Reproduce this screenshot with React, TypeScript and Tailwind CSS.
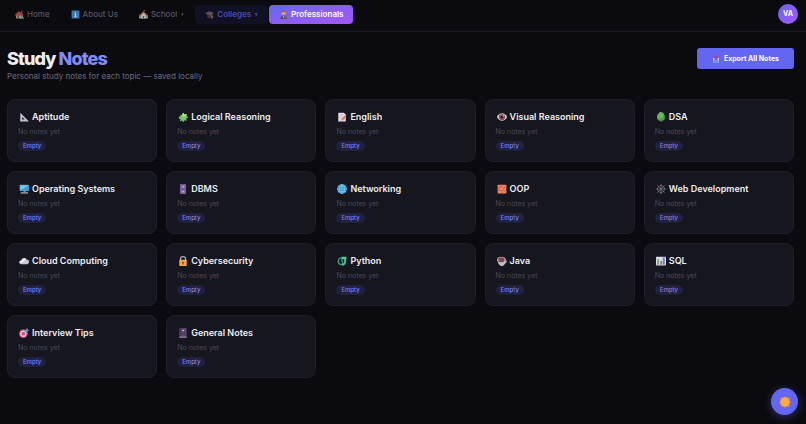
import type { ReactNode } from "react";
import { clsx } from "clsx";

type IconName =
  | "home" | "info" | "school" | "cap" | "person" | "export" | "ruler" | "puzzle" | "memo"
  | "eye" | "tree" | "desktop" | "cabinet" | "globe" | "brick" | "web" | "cloud" | "lock"
  | "snake" | "coffee" | "chart" | "target" | "notebook" | "sun";

const ICONS: Record<IconName, ReactNode> = {
  home: (
    <>
      <path d="M2 8h12v7H2z" fill="#d9c9b4" />
      <path d="M0 8 7 2l8 6-1 2H1z" fill="#c4523f" />
      <path d="M11 1h2v5h-2z" fill="#a8604c" />
      <path d="M4 10h3v5H4z" fill="#8a4a30" />
      <path d="M9 10h3v2H9z" fill="#4a93c9" />
      <path d="M10 13h6v3h-6z" fill="#5a9c46" />
    </>
  ),
  info: (
    <>
      <rect x="1" y="1" width="14" height="14" rx="1" fill="#3f96dd" />
      <path d="M7 3h2v2H7zM6 6h3v5h1v2H6v-2h1V8H6z" fill="#fff" />
    </>
  ),
  school: (
    <>
      <path d="M0 9h16v6H0z" fill="#c9b8ad" />
      <path d="M4 7l4-4 4 4v8H4z" fill="#e6dcd2" />
      <path d="M3 7l5-5 5 5-1 1-4-3-4 3zM0 9l3-2v3H0zM16 9l-3-2v3h3z" fill="#b0694f" />
      <path d="M8 0h3v2H8z" fill="#d34a3f" />
      <path d="M7 11h2v4H7z" fill="#7a4431" />
      <path d="M1 11h2v2H1zM13 11h2v2h-2z" fill="#5a7f9c" />
    </>
  ),
  cap: (
    <>
      <path d="M4 7v6c2 2 6 2 8 0V7z" fill="#4a3b40" />
      <path d="M0 6 7 2l9 3-7 5z" fill="#6e5a60" />
      <path d="M8 5l5 2v6h-1V8z" fill="#c98a3a" />
      <path d="M11 10h3v5h-3z" fill="#a9722f" />
    </>
  ),
  person: (
    <>
      <path d="M2 16c0-5 2-6 6-6s6 1 6 6z" fill="#4e5670" />
      <path d="M7 11h2l-1 3z" fill="#e8e4ee" />
      <circle cx="8" cy="5" r="4" fill="#e0a56d" />
      <path d="M4 5c0-6 8-6 8 0L9 3z" fill="#8a5a3c" />
      <path d="M9 12h5v3H9z" fill="#8a5a44" />
    </>
  ),
  export: (
    <>
      <path d="M2 6v9h12V6h-3v5H5V6z" fill="#b9c9dc" />
      <path d="M3 11h10v3H3z" fill="#5b91c4" />
      <path d="M8 0l4 5h-3v5H7V5H4z" fill="#d8395a" />
    </>
  ),
  ruler: (
    <>
      <path d="M2 1v14h14z" fill="#c8c1cf" />
      <path d="M5 8v4h4z" fill="#17171f" />
      <path d="M2 4h1M2 7h1M7 14v1M11 14v1" stroke="#77707f" />
    </>
  ),
  puzzle: (
    <>
      <path
        d="M4 4l3 1c-1-4 3-5 3-1l4-1-1 4c4-1 4 4 0 3l1 4-4-1c0 4-4 3-3 0l-4 2 1-4c-4 0-4-4 0-4z"
        fill="#72c76a"
      />
      <path d="M7 5c-1-4 3-5 3-1l4-1-1 4-3 1-3-1z" fill="#b5df67" />
    </>
  ),
  memo: (
    <>
      <path d="M2 1h9l3 3v11H2z" fill="#e4dcea" />
      <path d="M4 4h5M4 7h6M4 10h4M4 13h3" stroke="#c0b5ca" />
      <path d="M7 14l1-4 5-5 2 2-5 6z" fill="#ea774b" />
      <path d="M7 14l1-3 2 2z" fill="#f2c39b" />
    </>
  ),
  eye: (
    <>
      <path d="M0 8c3-8 13-8 16 0-3 8-13 8-16 0z" fill="#dccbd3" />
      <circle cx="8" cy="8" r="5" fill="#81525c" />
      <circle cx="8" cy="8" r="2" fill="#241920" />
      <circle cx="10" cy="6" r="1" fill="#fff" />
    </>
  ),
  tree: (
    <>
      <path d="M7 13h2v3H7z" fill="#8a5a3a" />
      <path d="M8 0c3 1 4 2 5 4 1 2 2 5 1 7s-3 3-6 3-5-1-6-3 0-5 1-7 2-3 5-4z" fill="#4ba34f" />
      <path d="M8 0c3 1 4 2 5 4l-2 5-4 2-4-1-1-2c0-2 0-3 1-4 1-2 2-3 5-4z" fill="#66b95a" />
    </>
  ),
  desktop: (
    <>
      <rect x="1" y="1" width="15" height="10" rx="1" fill="#3f9dd3" />
      <path d="M2 2h13L3 10H2z" fill="#75c9ef" />
      <path d="M7 11h4v2H7z" fill="#8b8494" />
      <path d="M3 13h11l1 2H2z" fill="#b6afc0" />
    </>
  ),
  cabinet: (
    <>
      <rect x="3" y="0" width="10" height="16" rx="1" fill="#6c5089" />
      <path d="M4 1h8v6H4zM4 9h8v6H4z" fill="#8968aa" />
      <path d="M7 3h2v2H7zM7 11h2v2H7z" fill="#d8cce6" />
    </>
  ),
  globe: (
    <>
      <circle cx="8" cy="8" r="8" fill="#3597cf" />
      <g fill="none" stroke="#8accea">
        <ellipse cx="8" cy="8" rx="4" ry="7" />
        <path d="M8 0v16M0 8h16M2 4h12M2 12h12" />
      </g>
    </>
  ),
  brick: (
    <>
      <rect x="1" y="1" width="14" height="14" rx="1" fill="#f08263" />
      <path d="M1 5h14M1 10h14M6 1v4M11 5v5M4 5v5M8 10v5" stroke="#c9604a" />
    </>
  ),
  web: (
    <g fill="none" stroke="#85818d">
      <path d="M8 0v16M0 8h16M2 2l12 12M14 2 2 14" />
      <path d="M8 2 12 4l2 4-2 4-4 2-4-2-2-4 2-4z" />
    </g>
  ),
  cloud: (
    <>
      <path d="M4 13c-5 0-5-6 0-6 1-5 8-5 8-1 6-1 5 7 1 7z" fill="#c9c3d6" />
      <path d="M4 11c-4-1-3-4 0-4 1-4 6-5 7-1-3 0-2 4-7 5z" fill="#f3f0fa" />
    </>
  ),
  lock: (
    <>
      <path d="M4 8V4c0-4 8-4 8 0v4" fill="none" stroke="#b7afba" strokeWidth="2" />
      <rect x="2" y="6" width="12" height="10" rx="1" fill="#f1a43f" />
      <path d="M7 9h2v4H7z" fill="#5c3920" />
    </>
  ),
  snake: (
    <>
      <path
        d="M9 5C8 2 2 3 2 8c0 6 6 7 7 4 1-2-3-4-1-7"
        fill="none"
        stroke="#35a882"
        strokeWidth="2"
      />
      <path d="M13 3v5c0 4-2 6-5 6" fill="none" stroke="#45c598" strokeWidth="3" />
      <path d="M7 1h8v4H8z" fill="#57cda0" />
    </>
  ),
  coffee: (
    <>
      <path d="M12 7c4-1 3 5-1 4" fill="none" stroke="#b4a8b8" strokeWidth="2" />
      <path d="M1 6c0 6 3 10 7 10s6-5 6-10z" fill="#cbbfd0" />
      <ellipse cx="7" cy="6" rx="7" ry="5" fill="#bba7b3" />
      <ellipse cx="7" cy="6" rx="5" ry="4" fill="#774851" />
    </>
  ),
  chart: (
    <>
      <rect x="0" y="1" width="16" height="14" rx="1" fill="#ded9e8" />
      <path d="M2 5h3v9H2z" fill="#5cb46b" />
      <path d="M7 8h3v6H7z" fill="#df5069" />
      <path d="M11 2h3v12h-3z" fill="#458fd4" />
    </>
  ),
  target: (
    <>
      <circle cx="7" cy="9" r="7" fill="#d94473" />
      <circle cx="7" cy="9" r="4" fill="none" stroke="#f1dce8" strokeWidth="2" />
      <path d="M7 9l5-5" stroke="#4ca4dd" strokeWidth="2" />
      <path d="M11 2l3-2v3h2l-2 3h-3z" fill="#4ca4dd" />
    </>
  ),
  notebook: (
    <>
      <rect x="2" y="0" width="12" height="16" rx="1" fill="#584168" />
      <path d="M2 14h12v1H2z" fill="#c5b9cf" />
      <path d="M7 3h3v2H7z" fill="#d5c8df" />
      <path d="M3 0h1v13H3z" fill="#3a2a48" />
    </>
  ),
  sun: (
    <>
      <path d="M8 0l2 2 4 0 0 4 2 2-2 2v4h-4l-2 2-2-2H2v-4L0 8l2-2V2h4z" fill="#d98552" />
      <circle cx="8" cy="8" r="6" fill="#f9ad3e" />
    </>
  ),
};

function Icon({ name, className = "size-[10px]" }: { name: IconName; className?: string }) {
  return (
    <svg viewBox="0 0 16 16" className={clsx("shrink-0", className)} aria-hidden="true">
      {ICONS[name]}
    </svg>
  );
}

type NavEntry = { label: string; icon: IconName; menu?: boolean; state?: "open" | "current" };

const NAV: NavEntry[] = [
  { label: "Home", icon: "home" },
  { label: "About Us", icon: "info" },
  { label: "School", icon: "school", menu: true },
  { label: "Colleges", icon: "cap", menu: true, state: "open" },
  { label: "Professionals", icon: "person", state: "current" },
];

const TOPICS: { title: string; icon: IconName }[] = [
  { title: "Aptitude", icon: "ruler" },
  { title: "Logical Reasoning", icon: "puzzle" },
  { title: "English", icon: "memo" },
  { title: "Visual Reasoning", icon: "eye" },
  { title: "DSA", icon: "tree" },
  { title: "Operating Systems", icon: "desktop" },
  { title: "DBMS", icon: "cabinet" },
  { title: "Networking", icon: "globe" },
  { title: "OOP", icon: "brick" },
  { title: "Web Development", icon: "web" },
  { title: "Cloud Computing", icon: "cloud" },
  { title: "Cybersecurity", icon: "lock" },
  { title: "Python", icon: "snake" },
  { title: "Java", icon: "coffee" },
  { title: "SQL", icon: "chart" },
  { title: "Interview Tips", icon: "target" },
  { title: "General Notes", icon: "notebook" },
];

function NavItem({ item }: { item: NavEntry }) {
  return (
    <a
      href="#"
      className={clsx(
        "flex items-center gap-[3px] rounded px-[10px] text-[8px] leading-[19px]",
        !item.state && "font-medium text-[#565664]",
        item.state === "open" && "bg-[#111125] font-semibold text-[#4a4bb0]",
        item.state === "current" && "bg-linear-to-br from-[#6366f1] to-[#a855f7] font-semibold text-white",
      )}
    >
      <Icon name={item.icon} className={clsx("size-[9px]", item.state !== "current" && "opacity-80")} />
      {item.label}
      {item.menu && <span className="ml-px text-[5px]">▾</span>}
    </a>
  );
}

function TopicCard({ title, icon }: { title: string; icon: IconName }) {
  return (
    <article className="rounded-lg border border-[#1e1e28] bg-[#16161e] p-[10px]">
      <h2 className="flex items-center gap-[3px] pl-px text-[9px] leading-[14px] font-semibold text-[#ededf2]">
        <Icon name={icon} />
        {title}
      </h2>
      <p className="mt-[2px] text-[7px] leading-[12px] text-[#4a4a58]">No notes yet</p>
      <span className="mt-[3px] block w-fit rounded-full bg-[#20203f] px-[5px] text-[6px] leading-[10px] font-medium text-[#7d80ee]">
        Empty
      </span>
    </article>
  );
}

export default function App() {
  return (
    <div className="min-h-screen bg-[#0a0a0f] font-['Inter',sans-serif] text-[#ededf2]">
      <header className="flex items-center justify-between border-b border-[#1a1a22] pt-1 pr-2 pb-[7px] pl-[5px]">
        <nav className="flex items-center gap-px" aria-label="Primary">
          {NAV.map((item) => (
            <NavItem key={item.label} item={item} />
          ))}
        </nav>
        <button
          type="button"
          aria-label="Account"
          className="size-5 rounded-full bg-linear-to-br from-[#6366f1] to-[#a855f7] text-[7px] font-bold text-white"
        >
          VA
        </button>
      </header>

      <main className="pt-4 pr-3 pl-[7px]">
        <div className="flex items-start justify-between">
          <div>
            <h1 className="text-[18px] leading-[22px] font-extrabold tracking-tighter">
              Study <span className="text-[#818cf8]">Notes</span>
            </h1>
            <p className="text-[8px] leading-[12px] text-[#6c6c7c]">
              Personal study notes for each topic — saved locally
            </p>
          </div>
          <button
            type="button"
            className="flex items-center gap-1 rounded-[3px] bg-[#6366f1] px-[15px] text-[7px] leading-[21px] font-bold text-white"
          >
            <Icon name="export" className="size-2" />
            Export All Notes
          </button>
        </div>

        <div className="mt-[17px] grid grid-cols-5 gap-[9px]">
          {TOPICS.map((topic) => (
            <TopicCard key={topic.title} {...topic} />
          ))}
        </div>
      </main>

      <button
        type="button"
        aria-label="Toggle theme"
        className="fixed right-2 bottom-[9px] flex size-[27px] items-center justify-center rounded-full bg-[#6366f1] shadow-[0_2px_10px_#6366f166]"
      >
        <Icon name="sun" className="size-3" />
      </button>
    </div>
  );
}
